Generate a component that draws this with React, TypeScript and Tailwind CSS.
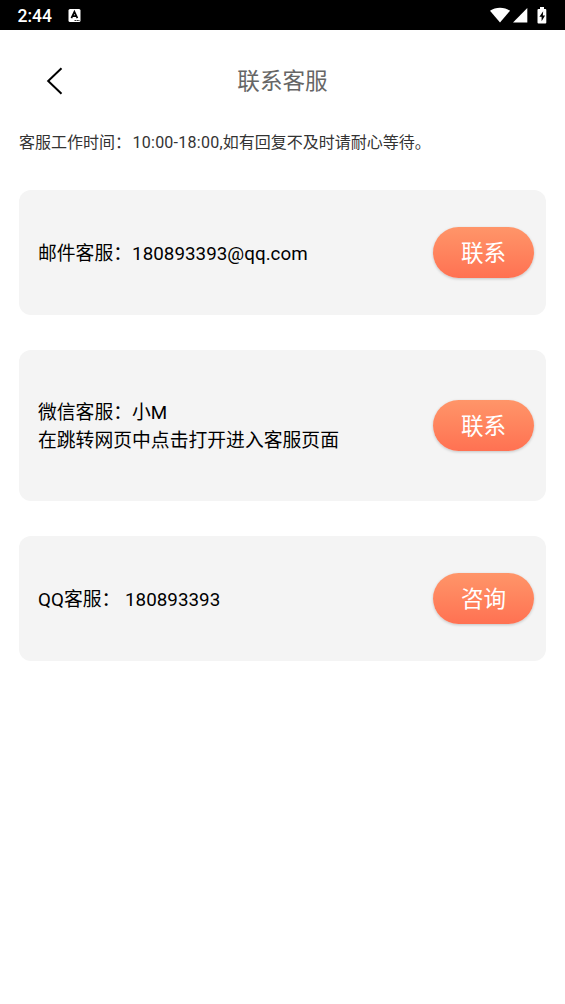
import React from 'react'

type Contact = {
    lines: string[];
    action: string;
    height: string;
}

const contacts: Contact[] = [
    { lines: ['邮件客服：180893393@qq.com'], action: '联系', height: 'h-[125px]' },
    { lines: ['微信客服：小M', '在跳转网页中点击打开进入客服页面'], action: '联系', height: 'h-[151px]' },
    { lines: ['QQ客服： 180893393'], action: '咨询', height: 'h-[125px]' },
]

const StatusBar = () => {
    return (
        <div className="flex h-[30px] items-center justify-between bg-black pl-[17.5px] pr-[18px] text-white">
            <div className="flex items-center gap-4">
                <span className="text-[17.5px] font-medium leading-[30px] pt-[2px]">2:44</span>
                <svg width="13" height="13" viewBox="0 0 13 13">
                    <rect x="0.5" y="0" width="12" height="13" rx="1.5" fill="#fff" />
                    <path d="M3.4 9.2 6.4 2.8 9.4 9.2M4.5 7.2h3.8" fill="none" stroke="#000" strokeWidth="1.7" />
                    <path d="M6.6 11.5h1.2M8.6 11.5h1.2M10.4 11.5h1" stroke="#000" strokeWidth="1" />
                </svg>
            </div>
            <div className="flex items-center">
                <svg width="20" height="16" viewBox="0 0 20 16">
                    <path d="M10 15.5 0 3.8C5.6-.4 14.4-.4 20 3.8Z" fill="#fff" />
                </svg>
                <svg className="ml-[3px]" width="15" height="15" viewBox="0 0 15 15">
                    <path d="M14.3 0v14.5H0Z" fill="#fff" />
                </svg>
                <svg className="ml-[9px]" width="10" height="17" viewBox="0 0 10 17">
                    <path d="M3 0h4v2h1.3q1 0 1 1v12.5q0 1-1 1H1.5q-1 0-1-1V3q0-1 1-1H3Z" fill="#fff" />
                    <path d="M6.2 4.2 2.4 9.8h2.2v4.4l3.5-5.6H5.8Z" fill="#000" />
                </svg>
            </div>
        </div>
    )
}

const Header = () => {
    return (
        <div className="grid h-[101px] grid-cols-[1fr_auto_1fr] items-center">
            <button className="ml-[46px] w-4" aria-label="返回">
                <svg width="17" height="28" viewBox="0 0 17 28">
                    <path d="M15.5 1.3 2.2 14l13.3 12.7" fill="none" stroke="#000" strokeWidth="2" />
                </svg>
            </button>
            <h1 className="pt-[2px] text-[22.6px] text-[#666]">联系客服</h1>
        </div>
    )
}

const ContactCard = ({ lines, action, height }: Contact) => {
    return (
        <div className={`flex items-center justify-between rounded-xl bg-[#f4f4f4] pl-[19px] pr-3 ${height}`}>
            <div className="pt-[2px] text-[18.8px] leading-7 tracking-[0.03px] text-black">
                {lines.map((line) => (
                    <p key={line}>{line}</p>
                ))}
            </div>
            <button className="h-[51px] w-[101px] rounded-full bg-linear-to-b from-[#ff9569] to-[#ff7152] pt-[2px] text-[22.6px] text-white shadow-[0_1px_3px_rgba(0,0,0,0.2)]">
                {action}
            </button>
        </div>
    )
}

const App = () => {
    return (
        <div className="min-h-screen bg-white font-[Roboto,'Noto_Sans_CJK_SC',sans-serif]">
            <StatusBar />
            <Header />
            <div className="px-[19px]">
                <p className="h-[59px] text-[16px] leading-[23px] text-[#333]">
                    客服工作时间：<span className="ml-[1.5px] tracking-[0.25px]">10:00-18:00,</span>如有回复不及时请耐心等待。
                </p>
                <div className="flex flex-col gap-[35px]">
                    {contacts.map((contact) => (
                        <ContactCard key={contact.lines[0]} {...contact} />
                    ))}
                </div>
            </div>
        </div>
    )
}

export default App
